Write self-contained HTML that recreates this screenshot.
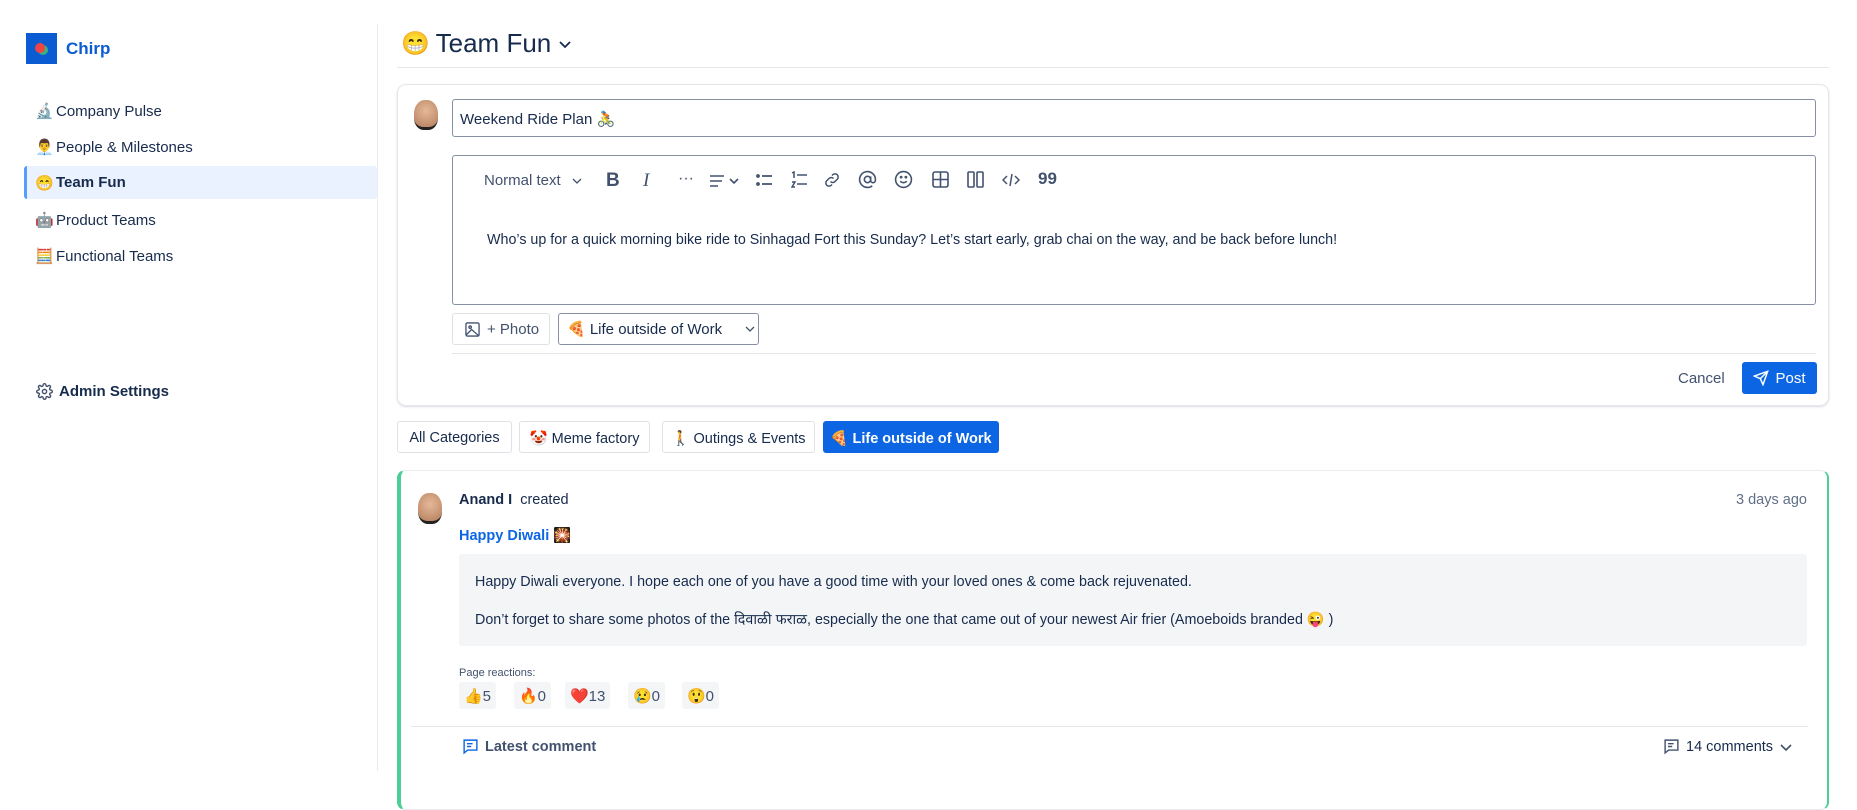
<!DOCTYPE html>
<html><head><meta charset="utf-8"><style>
*{box-sizing:border-box;margin:0;padding:0}
body{width:1857px;height:771px;overflow:hidden;background:#fff;font-family:"Liberation Sans","Noto Sans CJK SC",sans-serif;color:#172b4d;position:relative}
.a{position:absolute;white-space:nowrap}
.nav{left:24px;width:353px;height:36px;display:flex;align-items:center;padding-left:11px;font-size:15px;color:#172b4d}
.nav span.e{width:21px;font-size:15px}
.btn{position:absolute;border:1px solid #dfe1e6;border-radius:3px;display:flex;align-items:center;font-size:15px;color:#42526e;background:#fff}
svg{display:block}
.chip{position:absolute;top:682px;height:27px;background:#f4f5f7;border-radius:3px;display:flex;align-items:center;padding:0 5px;font-size:15px;color:#42526e;gap:5px}
.tb{position:absolute;top:170px}
</style></head><body>
<div class="a" style="left:26px;top:33px;width:31px;height:31px;background:#0b5bd3"><div style="position:absolute;left:9px;top:10px;width:10px;height:10px;border-radius:50%;background:#e44;box-shadow:3px 2px 0 #36b37e"></div></div>
<div class="a" style="left:66px;top:39px;font-size:17px;font-weight:bold;color:#0b5bd3">Chirp</div>
<div class="a nav" style="top:93px"><span class="e">🔬</span>Company Pulse</div>
<div class="a nav" style="top:129px"><span class="e">👨‍💼</span>People &amp; Milestones</div>
<div class="a nav" style="top:166px;height:33px;background:#e9f2fe;border-left:3px solid #579dff;border-radius:3px;padding-left:8px;font-weight:bold"><span class="e">😁</span>Team Fun</div>
<div class="a nav" style="top:202px"><span class="e">🤖</span>Product Teams</div>
<div class="a nav" style="top:238px"><span class="e">🧮</span>Functional Teams</div>
<div class="a" style="left:36px;top:383px;display:flex;align-items:center;font-size:15px;font-weight:bold;gap:6px"><svg width="17" height="17" viewBox="0 0 24 24" fill="none" stroke="#42526e" stroke-width="2"><circle cx="12" cy="12" r="3"/><path d="M19.4 15a1.7 1.7 0 0 0 .3 1.8l.1.1a2 2 0 1 1-2.8 2.8l-.1-.1a1.7 1.7 0 0 0-1.8-.3 1.7 1.7 0 0 0-1 1.5V21a2 2 0 1 1-4 0v-.1a1.7 1.7 0 0 0-1.1-1.5 1.7 1.7 0 0 0-1.8.3l-.1.1a2 2 0 1 1-2.8-2.8l.1-.1a1.7 1.7 0 0 0 .3-1.8 1.7 1.7 0 0 0-1.5-1H3a2 2 0 1 1 0-4h.1a1.7 1.7 0 0 0 1.5-1.1 1.7 1.7 0 0 0-.3-1.8l-.1-.1a2 2 0 1 1 2.8-2.8l.1.1a1.7 1.7 0 0 0 1.8.3H9a1.7 1.7 0 0 0 1-1.5V3a2 2 0 1 1 4 0v.1a1.7 1.7 0 0 0 1 1.5 1.7 1.7 0 0 0 1.8-.3l.1-.1a2 2 0 1 1 2.8 2.8l-.1.1a1.7 1.7 0 0 0-.3 1.8V9a1.7 1.7 0 0 0 1.5 1H21a2 2 0 1 1 0 4h-.1a1.7 1.7 0 0 0-1.5 1z"/></svg>Admin Settings</div>
<div class="a" style="left:377px;top:24px;width:1px;height:747px;background:#ebecf0"></div>
<div class="a" style="left:401px;top:28px;font-size:26px;display:flex;align-items:center;gap:6px"><span style="font-size:23px">😁</span>Team Fun <svg width="16" height="16" viewBox="0 0 16 16" fill="none" stroke="#172b4d" stroke-width="1.8"><path d="M3 6l5 5 5-5"/></svg></div>
<div class="a" style="left:397px;top:67px;width:1432px;height:1px;background:#e4e6ea"></div>
<div class="a" style="left:397px;top:84px;width:1432px;height:322px;border:1px solid #e4e6ea;border-radius:9px;box-shadow:0 1px 2px rgba(9,30,66,.15)"></div>
<div class="a" style="left:414px;top:100px;width:24px;height:30px;border-radius:45% 45% 40% 40%;background:radial-gradient(circle at 50% 40%,#e6b898,#b27e5c);border-bottom:3px solid #222"></div>
<div class="a" style="left:452px;top:99px;width:1364px;height:38px;border:1px solid #8590a2;border-radius:3px;font-size:15px;padding:10px 7px">Weekend Ride Plan 🚴</div>
<div class="a" style="left:452px;top:155px;width:1364px;height:150px;border:1px solid #8590a2;border-radius:3px"></div>
<div class="a" style="left:484px;top:172px;font-size:15px;color:#42526e;display:flex;align-items:center;gap:10px">Normal text <svg width="12" height="12" viewBox="0 0 12 12" fill="none" stroke="#42526e" stroke-width="1.3"><path d="M2 4l4 4 4-4"/></svg></div>
<div class="tb" style="left:606px;font-size:19px;font-weight:bold;color:#42526e">B</div>
<div class="tb" style="left:643px;font-size:19px;font-style:italic;font-family:'Liberation Serif',serif;color:#42526e">I</div>
<div class="tb" style="left:678px;font-size:16px;color:#42526e">···</div>
<svg class="tb" style="left:709px;top:173px" width="34" height="16" viewBox="0 0 34 16" fill="none" stroke="#42526e" stroke-width="1.6"><path d="M1 3h14M1 8h12M1 13h8M21 6l4 4 4-4"/></svg>
<svg class="tb" style="left:756px;top:172px" width="17" height="17" viewBox="0 0 17 17" fill="none" stroke="#42526e" stroke-width="1.8"><path d="M6 4h10M6 12h10"/><circle cx="2" cy="4" r="1"/><circle cx="2" cy="12" r="1"/></svg>
<svg class="tb" style="left:791px;top:171px" width="17" height="18" viewBox="0 0 17 18" fill="none" stroke="#42526e" stroke-width="1.5"><path d="M6 4h10M6 13h10M1 2l2-1v6M1 11h3l-3 5h3"/></svg>
<svg class="tb" style="left:823px;top:171px" width="18" height="18" viewBox="0 0 24 24" fill="none" stroke="#42526e" stroke-width="2"><path d="M10 14a4 4 0 0 0 6 0l3-3a4 4 0 0 0-6-6l-1 1M14 10a4 4 0 0 0-6 0l-3 3a4 4 0 0 0 6 6l1-1"/></svg>
<svg class="tb" style="left:858px;top:170px" width="19" height="19" viewBox="0 0 24 24" fill="none" stroke="#42526e" stroke-width="2"><circle cx="12" cy="12" r="4"/><path d="M16 8v5a3 3 0 0 0 6 0v-1a10 10 0 1 0-4 8"/></svg>
<svg class="tb" style="left:894px;top:170px" width="19" height="19" viewBox="0 0 24 24" fill="none" stroke="#42526e" stroke-width="2"><circle cx="12" cy="12" r="10"/><path d="M8 14s1.5 2 4 2 4-2 4-2"/><circle cx="9" cy="9" r=".8"/><circle cx="15" cy="9" r=".8"/></svg>
<svg class="tb" style="left:932px;top:171px" width="17" height="17" viewBox="0 0 17 17" fill="none" stroke="#42526e" stroke-width="1.6"><rect x="1" y="1" width="15" height="15" rx="2"/><path d="M8.5 1v15M1 8.5h15"/></svg>
<svg class="tb" style="left:967px;top:171px" width="17" height="17" viewBox="0 0 17 17" fill="none" stroke="#42526e" stroke-width="1.6"><rect x="1" y="1" width="6" height="15" rx="1"/><rect x="10" y="1" width="6" height="15" rx="1"/></svg>
<svg class="tb" style="left:1002px;top:171px" width="18" height="18" viewBox="0 0 18 18" fill="none" stroke="#42526e" stroke-width="1.5"><path d="M5 5L1 9l4 4M13 5l4 4-4 4M10 3L8 15"/></svg>
<div class="tb" style="left:1038px;top:169px;font-size:17px;color:#42526e;font-weight:bold">99</div>
<div class="a" style="left:487px;top:232px;font-size:14.3px">Who’s up for a quick morning bike ride to Sinhagad Fort this Sunday? Let’s start early, grab chai on the way, and be back before lunch!</div>
<div class="btn" style="left:452px;top:313px;width:98px;height:32px;padding-left:12px;gap:7px"><svg width="15" height="15" viewBox="0 0 16 16" fill="none" stroke="#42526e" stroke-width="1.4"><rect x="1" y="1" width="14" height="14" rx="1.5"/><circle cx="5.5" cy="5.5" r="1.3"/><path d="M1 14l6-6 8 7"/></svg>+ Photo</div>
<div class="btn" style="left:558px;top:313px;width:201px;height:32px;border-color:#8590a2;padding-left:8px;gap:6px;color:#172b4d">🍕 Life outside of Work<svg style="margin-left:16px" width="12" height="12" viewBox="0 0 12 12" fill="none" stroke="#42526e" stroke-width="1.3"><path d="M2 4l4 4 4-4"/></svg></div>
<div class="a" style="left:452px;top:353px;width:1364px;height:1px;background:#e4e6ea"></div>
<div class="a" style="left:1678px;top:370px;font-size:15px;color:#42526e">Cancel</div>
<div class="a" style="left:1742px;top:362px;width:75px;height:32px;background:#0c66e4;border-radius:3px;color:#fff;font-size:15px;display:flex;align-items:center;justify-content:center;gap:6px"><svg width="16" height="16" viewBox="0 0 24 24" fill="none" stroke="#fff" stroke-width="2.2"><path d="M22 2L11 13M22 2l-7 20-4-9-9-4z"/></svg>Post</div>
<div class="btn" style="left:397px;top:421px;width:115px;height:32px;justify-content:center;color:#172b4d;font-size:14.5px;padding-top:2px">All Categories</div>
<div class="btn" style="left:519px;top:421px;width:131px;height:32px;justify-content:center;color:#172b4d;font-size:14.5px;padding-top:2px">🤡 Meme factory</div>
<div class="btn" style="left:662px;top:421px;width:153px;height:32px;justify-content:center;color:#172b4d;font-size:14.5px;padding-top:2px">🚶 Outings &amp; Events</div>
<div class="btn" style="left:823px;top:421px;width:176px;height:32px;justify-content:center;background:#0c66e4;border-color:#0c66e4;color:#fff;font-weight:bold;font-size:14.5px;padding-top:2px">🍕 Life outside of Work</div>
<div class="a" style="left:397px;top:470px;width:1432px;height:340px;border:1px solid #ebecf0;border-left:4px solid #4bce97;border-right:2px solid #4bce97;border-radius:8px"></div>
<div class="a" style="left:418px;top:493px;width:24px;height:31px;border-radius:45% 45% 40% 40%;background:radial-gradient(circle at 50% 40%,#e6b898,#b27e5c);border-bottom:3px solid #222"></div>
<div class="a" style="left:459px;top:492px;font-size:14.5px"><b>Anand I</b>&nbsp; created</div>
<div class="a" style="left:1736px;top:492px;font-size:14.5px;color:#626f86">3 days ago</div>
<div class="a" style="left:459px;top:527px;font-size:14.5px;color:#0c66e4;font-weight:bold">Happy Diwali 🎇</div>
<div class="a" style="left:459px;top:554px;width:1348px;height:92px;background:#f4f5f7;border-radius:3px"></div>
<div class="a" style="left:475px;top:574px;font-size:14.3px">Happy Diwali everyone. I hope each one of you have a good time with your loved ones &amp; come back rejuvenated.</div>
<div class="a" style="left:475px;top:610px;font-size:14.3px">Don’t forget to share some photos of the दिवाळी फराळ, especially the one that came out of your newest Air frier (Amoeboids branded 😜 )</div>
<div class="a" style="left:459px;top:667px;font-size:11px;color:#42526e">Page reactions:</div>
<div class="chip" style="left:459px">👍5</div>
<div class="chip" style="left:514px">🔥0</div>
<div class="chip" style="left:565px">❤️13</div>
<div class="chip" style="left:628px">😢0</div>
<div class="chip" style="left:682px">😲0</div>
<div class="a" style="left:411px;top:726px;width:1397px;height:1px;background:#e4e6ea"></div>
<div class="a" style="left:462px;top:738px;font-size:14.5px;font-weight:bold;color:#42526e;display:flex;align-items:center;gap:6px"><svg width="17" height="17" viewBox="0 0 24 24" fill="none" stroke="#0c66e4" stroke-width="2"><path d="M3 3h18v14H8l-5 4z"/><path d="M7 8h8M7 12h6"/></svg>Latest comment</div>
<div class="a" style="left:1663px;top:738px;font-size:14.5px;color:#172b4d;display:flex;align-items:center;gap:6px"><svg width="17" height="17" viewBox="0 0 24 24" fill="none" stroke="#42526e" stroke-width="2"><path d="M3 3h18v14H8l-5 4z"/><path d="M7 8h8M7 12h6"/></svg>14 comments <svg width="14" height="14" viewBox="0 0 14 14" fill="none" stroke="#42526e" stroke-width="1.6"><path d="M2 5l5 5 5-5"/></svg></div>
</body></html>
